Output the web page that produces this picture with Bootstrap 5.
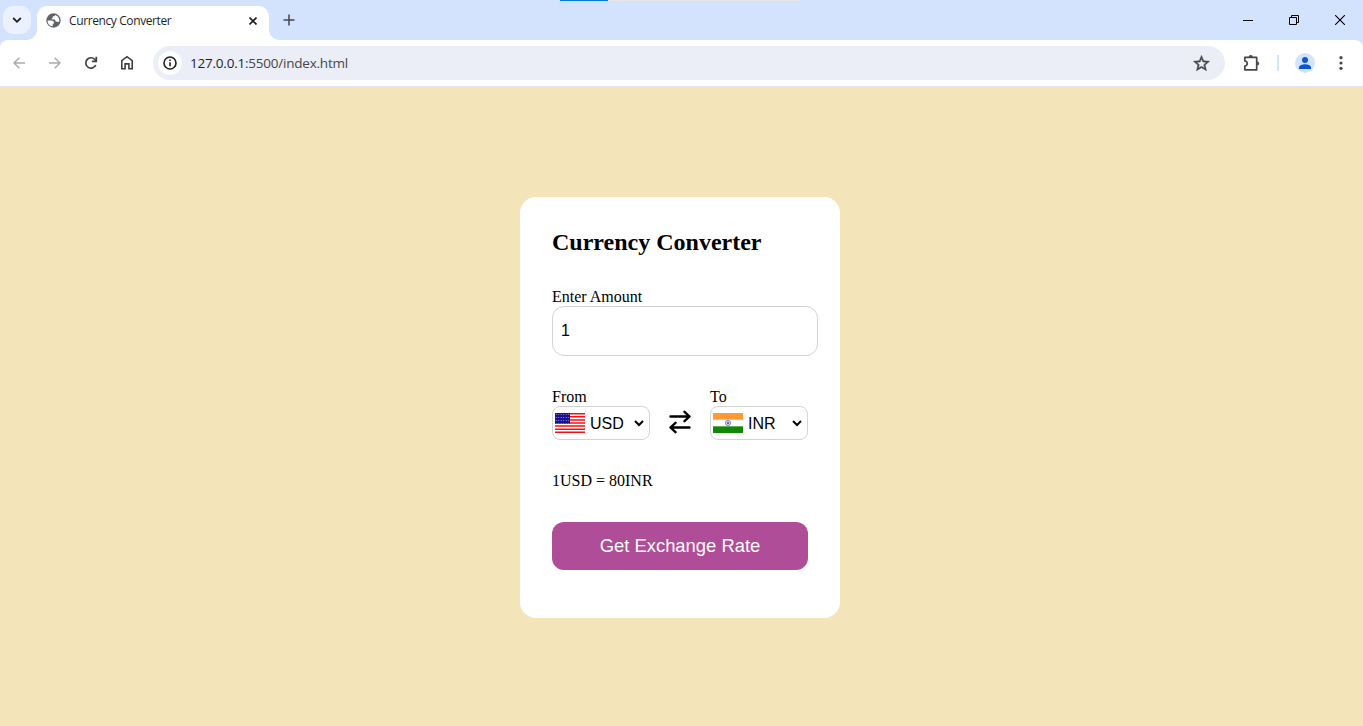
<!DOCTYPE html>
<html lang="en">
<head>
<meta charset="utf-8">
<meta name="viewport" content="width=device-width, initial-scale=1">
<title>Currency Converter</title>
<link href="https://cdn.jsdelivr.net/npm/bootstrap@5.3.0/dist/css/bootstrap.min.css" rel="stylesheet">
<style>
html, body { height: 100%; overflow: hidden; }
body { font-family: "Liberation Serif", serif; color: #000; }
svg { display: block; flex: none; }
.browser { font-family: "Open Sans", "Noto Sans", sans-serif; color: #1f1f1f; }
.tabstrip { height: 40px; background: #d3e3fd; }
.tab-search { width: 28px; height: 28px; margin: 6px 6px 6px 3px; border-radius: 10px; background: #ebf1fe; }
.tab { width: 232px; height: 34px; margin-top: 6px; padding: 0 8px 5px 9px; border-radius: 10px 10px 0 0; background: #fff; }
.tab::before, .tab::after { content: ""; position: absolute; bottom: 0; width: 10px; height: 10px; }
.tab::before { left: -10px; background: radial-gradient(circle at 0 0, #d3e3fd 9.5px, #fff 10px); }
.tab::after { right: -10px; background: radial-gradient(circle at 100% 0, #d3e3fd 9.5px, #fff 10px); }
.tab-title { font-size: 12px; line-height: 16px; margin-left: 8px; letter-spacing: -.39px; white-space: nowrap; }
.new-tab { margin-left: 14px; }
.win-btn { width: 46px; height: 40px; }
.loader { left: 560px; width: 241px; height: 1px; background: #e6e6e6; }
.loader-bar { width: 48px; height: 1px; background: #0078d7; }
.toolbar-wrap { height: 47px; background: #d3e3fd; }
.toolbar { height: 47px; background: #fff; border-radius: 8px 8px 0 0; border-bottom: 1px solid #e0e3e7; }
.nav-ico { width: 36px; height: 34px; padding: 0 0 1px 2px; }
.omnibox { height: 34px; border-radius: 17px; background: #ebeef7; margin-left: 9px; padding-left: 5px; padding-right: 15px; }
.site-info { width: 24px; height: 24px; background: #fff; }
.url { font-size: 13.5px; line-height: 20px; margin-left: 8px; color: #474747; letter-spacing: -.22px; }
.url b { font-weight: 400; color: #1f1f1f; }
.extensions { margin-left: 18px; }
.sep { width: 2px; height: 16px; margin: 0 16px 0 17px; background: #d3e3fd; }
.avatar { width: 20px; height: 20px; background: #d3e3fd; }
.more { margin: 0 20px 0 24px; }
.page { background: #f4e4ba; padding: 2px 3px 0 0; }
.converter { width: 320px; padding: 32px 32px 48px; border-radius: 16px; background: #fff; }
.converter h2 { font-size: 24px; line-height: 27px; font-weight: 700; margin: 0 0 32px; white-space: nowrap; }
.converter label, .msg { display: block; font-size: 16px; line-height: 18px; }
.amount { width: 266px; height: 50px; margin-bottom: 32px; padding: 0 8px; border: 1px solid #d3d3d3; border-radius: 12px; font: 16px "Liberation Sans", sans-serif; color: #000; outline: 0; }
.picker { width: 98px; height: 34px; padding: 0 5px 0 2px; border: 1px solid #d3d3d3; border-radius: 8px; font: 16px/20px "Liberation Sans", sans-serif; }
.code { margin-left: 5px; padding-top: 2px; }
.swap { padding-top: 16px; }
.msg { margin: 32px 0; }
.rate-btn { width: 256px; height: 48px; padding: 0; border: 0; border-radius: 12px; background: #af4d98 !important; color: #fff !important; font: 18.4px "Liberation Sans", sans-serif; }
</style>
</head>
<body class="d-flex flex-column m-0">
<header class="browser flex-shrink-0">
  <div class="tabstrip d-flex position-relative">
    <div class="tab-search d-flex align-items-center justify-content-center">
      <svg width="10" height="8" viewBox="0 0 10 8" fill="none" stroke="#1f1f1f" stroke-width="1.8"><path d="M1.2 2 5 5.8 8.8 2"/></svg>
    </div>
    <div class="tab d-flex align-items-center position-relative">
      <svg width="15" height="15" viewBox="0 0 15 15"><circle cx="7.5" cy="7.5" r="7.200" fill="#5f6368"/><path fill="#fff" d="M1.500 7.400h3.200c2.100 0 3.300.8 3.300 2.300 0 .7-.4 1.100-1.200 1.100v1.500c0 .7-.4 1-1.100 1C3 12.400 1.500 10.200 1.500 7.400zM9.200 2c-.2.900-.8 1.300-1.600 1.300-.8 0-.9.500-.9 1.100 0 .8-.6 1-1.200 1 .1.800.7 1 1.600 1h1.300c.8 0 .9.500.9 1.100 0 .9.600 1.300 1.500 1.300h2.500c.5-2.900-1.200-5.900-4.100-6.800z"/></svg>
      <span class="tab-title">Currency Converter</span>
      <svg class="ms-auto me-1" width="8" height="8" viewBox="0 0 8 8" stroke="#1f1f1f" stroke-width="1.6"><path d="m.5.5 7 7m0-7-7 7"/></svg>
    </div>
    <svg class="new-tab align-self-center" width="12" height="12" viewBox="0 0 12 12" stroke="#474747" stroke-width="1.5"><path d="M6 .5v11M.5 6h11"/></svg>
    <div class="d-flex ms-auto">
      <div class="win-btn d-flex align-items-center justify-content-center"><svg width="10" height="11" viewBox="0 0 10 11" fill="none" stroke="#000"><path d="M0 5.500h10"/></svg></div>
      <div class="win-btn d-flex align-items-center justify-content-center"><svg width="10" height="10" viewBox="0 0 10 10" fill="none" stroke="#000"><path d="M.5 2.500h7v7h-7zM2.500 2.500v-2h7v7h-2"/></svg></div>
      <div class="win-btn d-flex align-items-center justify-content-center"><svg width="10" height="10" viewBox="0 0 10 10" fill="none" stroke="#000" stroke-width="1.1"><path d="m0 0 10 10M10 0 0 10"/></svg></div>
    </div>
    <div class="loader position-absolute top-0"><div class="loader-bar"></div></div>
  </div>
  <div class="toolbar-wrap">
    <div class="toolbar d-flex align-items-center">
      <div class="nav-ico d-flex align-items-center justify-content-center"><svg width="12" height="12" viewBox="0 0 12 12" fill="none" stroke="#aaa" stroke-width="1.500"><path d="M12 6H1M6.300.7 1 6l5.300 5.300"/></svg></div>
      <div class="nav-ico d-flex align-items-center justify-content-center"><svg width="12" height="12" viewBox="0 0 12 12" fill="none" stroke="#aaa" stroke-width="1.500"><path d="M0 6h11M5.700.7 11 6l-5.300 5.300"/></svg></div>
      <div class="nav-ico d-flex align-items-center justify-content-center"><svg width="14" height="14" viewBox="0 0 14 14" fill="none" stroke="#3c4043" stroke-width="1.700"><path d="M11.800 9A5.200 5.200 0 1 1 10.900 3.500l1.300 1.500"/><path d="M12.300.8v4.500H7.900"/></svg></div>
      <div class="nav-ico d-flex align-items-center justify-content-center"><svg width="14" height="15" viewBox="0 0 14 15" fill="none" stroke="#3c4043" stroke-width="1.600"><path d="M1.800 13.700V5.600L7 1.700l5.200 3.900v8.100H8.900V8.900H5.100v4.800z"/></svg></div>
      <div class="omnibox d-flex align-items-center flex-grow-1">
        <div class="site-info rounded-circle d-flex align-items-center justify-content-center">
          <svg width="14" height="14" viewBox="0 0 14 14" fill="none" stroke="#1f1f1f" stroke-width="1.600"><circle cx="7" cy="7" r="6"/><path d="M7 6.200v4M7 3.500v1.600"/></svg>
        </div>
        <span class="url"><b>127.0.0.1</b>:5500/index.html</span>
        <svg class="ms-auto" width="17" height="17" viewBox="1.500 1.500 21 21" fill="#474747" stroke="#474747" stroke-width=".6"><path d="m22 9.240-7.190-.62L12 2 9.190 8.630 2 9.240l5.460 4.730L5.820 21 12 17.270 18.180 21l-1.630-7.030L22 9.240zM12 15.400l-3.760 2.270 1-4.280-3.320-2.880 4.380-.38L12 6.100l1.710 4.040 4.380.38-3.320 2.880 1 4.280L12 15.400z"/></svg>
      </div>
      <svg class="extensions" width="17" height="17" viewBox="0 0 17 17"><path d="M1.800 2.300h11.900v12.500H1.800v-3.700c3.200-.4 3.200-4.700 0-5.100z" fill="none" stroke="#474747" stroke-width="1.700" stroke-linejoin="round"/><path d="M5.800 2a2 2 0 0 1 4 0zM14.200 6.600a2 2 0 0 1 0 4z" fill="#474747"/></svg>
      <div class="sep"></div>
      <div class="avatar rounded-circle d-flex align-items-center justify-content-center"><svg width="12" height="12" viewBox="0 0 12 12" fill="#0b57d0"><circle cx="6" cy="3" r="3"/><path d="M0 12v-1.500C0 8.300 3.500 7.300 6 7.300s6 1 6 3.200V12z"/></svg></div>
      <svg class="more" width="4" height="14" viewBox="0 0 4 14" fill="#474747"><circle cx="2" cy="1.700" r="1.600"/><circle cx="2" cy="7" r="1.600"/><circle cx="2" cy="12.300" r="1.600"/></svg>
    </div>
  </div>
</header>
<main class="page flex-grow-1 d-flex align-items-center justify-content-center">
  <div class="converter">
    <h2>Currency Converter</h2>
    <form>
      <label for="amount">Enter Amount</label>
      <input class="amount d-block" id="amount" type="text" value="1">
      <div class="d-flex justify-content-between align-items-center">
        <div>
          <label>From</label>
          <div class="picker d-flex align-items-center">
            <svg width="30" height="20" viewBox="0 0 30 20">
              <defs><pattern id="stars" width="2.500" height="3" patternUnits="userSpaceOnUse"><rect width="2.500" height="3" fill="#1a0e91"/><circle cx="1.200" cy="1.500" r=".55" fill="#aaa9e0"/></pattern></defs>
              <path fill="#fff" d="M0 0h30v20H0z"/>
              <path stroke="#f50f14" stroke-width="1.540" d="M0 .77h30M0 3.850h30M0 6.920h30M0 10h30M0 13.080h30M0 16.150h30M0 19.230h30"/>
              <path fill="url(#stars)" d="M0 0h15v10.700H0z"/>
            </svg>
            <span class="code">USD</span>
            <svg class="ms-auto" width="10" height="7" viewBox="0 0 10 7" fill="none" stroke="#000" stroke-width="2"><path d="m1 1 4 4 4-4"/></svg>
          </div>
        </div>
        <div class="swap">
          <svg width="22" height="24" viewBox="0 0 22 24" fill="none" stroke="#000" stroke-width="2.400" stroke-linecap="round" stroke-linejoin="round"><path d="M1.500 6.500h19M15.500 1.800l5 4.700-5 4.700M20.500 17.500h-19M6.500 12.800l-5 4.700 5 4.700"/></svg>
        </div>
        <div>
          <label>To</label>
          <div class="picker d-flex align-items-center">
            <svg width="30" height="20" viewBox="0 0 30 20">
              <path fill="#fff" d="M0 0h30v20H0z"/><path fill="#f93" d="M0 0h30v6.670H0z"/><path fill="#128807" d="M0 13.330h30V20H0z"/>
              <circle cx="15" cy="10" r="2.600" fill="#d5d5ef" stroke="#7070bb" stroke-width=".8"/><circle cx="15" cy="10" r="1" fill="#4545a5"/>
            </svg>
            <span class="code">INR</span>
            <svg class="ms-auto" width="10" height="7" viewBox="0 0 10 7" fill="none" stroke="#000" stroke-width="2"><path d="m1 1 4 4 4-4"/></svg>
          </div>
        </div>
      </div>
      <div class="msg">1USD = 80INR</div>
      <button class="btn rate-btn d-block" type="button">Get Exchange Rate</button>
    </form>
  </div>
</main>
<script src="https://cdn.jsdelivr.net/npm/bootstrap@5.3.0/dist/js/bootstrap.bundle.min.js"></script>
</body>
</html>
